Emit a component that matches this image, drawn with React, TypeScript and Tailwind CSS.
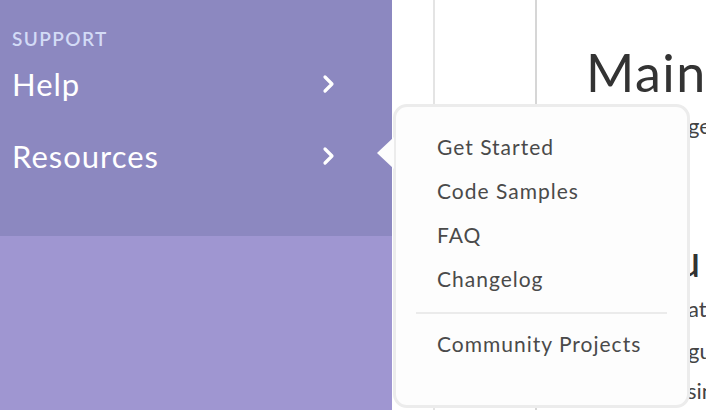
import React from 'react'

const menuItems = ['Get Started', 'Code Samples', 'FAQ', 'Changelog']

function Chevron(): React.ReactElement {
    return (
        <svg width="14" height="20" viewBox="0 0 14 20" fill="none">
            <path d="M3 3l7 7-7 7" stroke="white" strokeWidth="3.2" strokeLinecap="round" strokeLinejoin="round"/>
        </svg>
    )
}

export default function App(): React.ReactElement {
    return (
        <div className="relative flex w-[706px] h-[410px] overflow-hidden bg-white font-['Lato','Liberation_Sans',sans-serif]">
            {/* sidebar */}
            <div className="flex flex-col w-[392px] shrink-0 bg-[#9f96d1]">
                <div className="flex flex-col h-[236px] bg-[#8c88c0] pt-[27px]">
                    <div className="pl-[12px] text-[19px] leading-[24px] font-semibold tracking-[1.4px] text-[#d3dbf6]">SUPPORT</div>
                    <div className="flex items-center justify-between pl-[12px] pr-[56px] h-[72px] mt-[-3px]">
                        <span className="text-[31px] tracking-[1px] text-white">Help</span>
                        <Chevron/>
                    </div>
                    <div className="flex items-center justify-between pl-[12px] pr-[56px] h-[72px]">
                        <span className="text-[31px] tracking-[1px] text-white">Resources</span>
                        <Chevron/>
                    </div>
                </div>
            </div>

            {/* main area */}
            <div className="flex flex-1 min-w-0">
                <div className="w-[41px] shrink-0"/>
                <div className="w-[104px] shrink-0 border-l-2 border-r-2 border-l-[#e4e4e4] border-r-[#d6d6d6]"/>
                <div className="flex flex-col pl-[49px] pt-[40px] whitespace-nowrap text-[#333]">
                    <h1 className="text-[52px] leading-[64px] tracking-[1.5px] font-normal">Main</h1>
                    <p className="text-[22px] leading-[40px] text-[#444] mt-[2px] pl-[102px]">ge</p>
                    <h2 className="text-[44px] leading-[56px] mt-[86px] pl-[90px]">u</h2>
                    <p className="text-[22px] leading-[42px] text-[#444] pl-[102px]">at</p>
                    <p className="text-[22px] leading-[42px] text-[#444] pl-[102px]">gu</p>
                    <p className="text-[22px] leading-[38px] text-[#444] pl-[101px]">sin</p>
                </div>
            </div>

            {/* resources popover */}
            <div className="absolute left-[393px] top-[104px] w-[297px] h-[304px] rounded-[14px] border-[3px] border-[#ececec] bg-[#fdfdfd]">
                <div className="absolute left-[-19px] top-[30px] w-0 h-0 border-y-[16px] border-y-transparent border-r-[17px] border-r-[#fdfdfd]"/>
                <ul className="flex flex-col pt-[18px] text-[21px] tracking-[1px] text-[#4a4a4a]">
                    {menuItems.map(item => (
                        <li key={item} className="pl-[41px] h-[44px] leading-[44px]">{item}</li>
                    ))}
                </ul>
                <div className="mx-[20px] mt-[11px] h-[2px] bg-[#ebebeb]"/>
                <div className="pl-[41px] pt-[8px] h-[44px] leading-[44px] text-[21px] tracking-[1px] text-[#4a4a4a]">Community Projects</div>
            </div>
        </div>
    )
}
